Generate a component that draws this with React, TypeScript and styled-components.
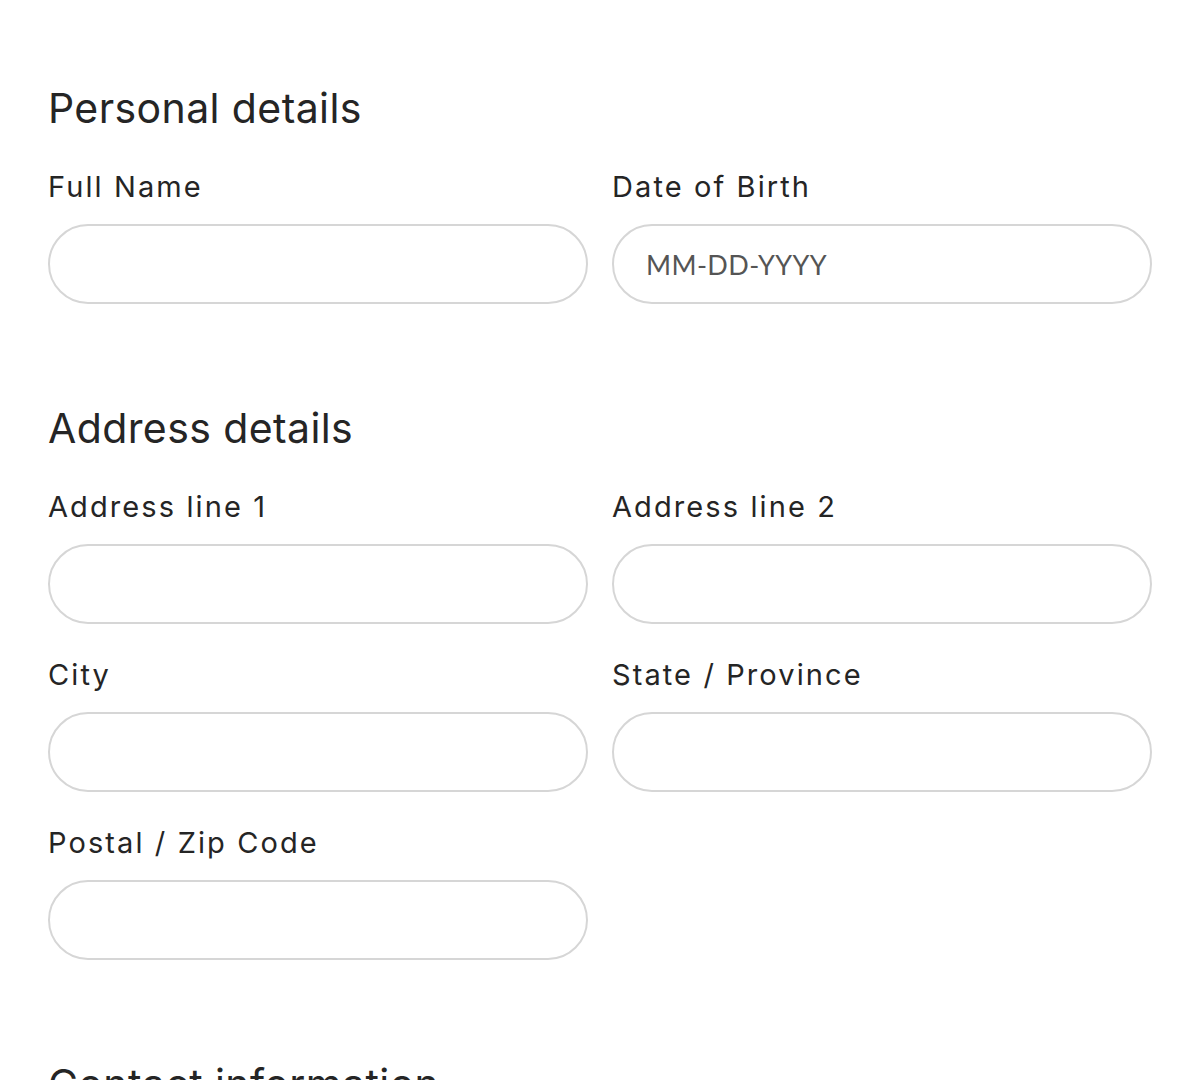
import styled, { createGlobalStyle } from 'styled-components'

const GlobalStyle = createGlobalStyle`
  html, body {
    margin: 0;
    padding: 0;
    background: #ffffff;
  }

  body {
    font-family: Inter, 'Noto Sans', sans-serif;
    color: #222222;
  }
`

type FieldDef = {
  label: string
  placeholder?: string
}

const personal: FieldDef[] = [
  { label: 'Full Name' },
  { label: 'Date of Birth', placeholder: 'MM-DD-YYYY' },
]

const address: FieldDef[] = [
  { label: 'Address line 1' },
  { label: 'Address line 2' },
  { label: 'City' },
  { label: 'State / Province' },
  { label: 'Postal / Zip Code' },
]

const FormSection = ({ title, fields }: { title: string; fields: FieldDef[] }) => {
  return (
    <Section>
      <SectionTitle>{title}</SectionTitle>
      <FieldGrid>
        {fields.map((f) => (
          <Field key={f.label}>
            <Label>{f.label}</Label>
            <Input type="text" placeholder={f.placeholder} />
          </Field>
        ))}
      </FieldGrid>
    </Section>
  )
}

const App = () => {
  return (
    <>
      <GlobalStyle />
      <Page>
        <FormSection title="Personal details" fields={personal} />
        <FormSection title="Address details" fields={address} />
        <Section>
          <SectionTitle>Contact information</SectionTitle>
        </Section>
      </Page>
    </>
  )
}

const Page = styled.main`
  display: flex;
  flex-direction: column;
  gap: 96px;
  padding: 80px 48px 48px;
  height: 1080px;
  box-sizing: border-box;
  overflow: hidden;
`

const Section = styled.section`
  display: flex;
  flex-direction: column;
`

const SectionTitle = styled.h2`
  margin: 0 0 31px;
  font-size: 41px;
  line-height: 56px;
  font-weight: 400;
  letter-spacing: 0.4px;
  color: #252525;
`

const FieldGrid = styled.div`
  display: grid;
  grid-template-columns: 1fr 1fr;
  column-gap: 24px;
  row-gap: 31px;
`

const Field = styled.div`
  display: flex;
  flex-direction: column;
`

const Label = styled.label`
  margin-bottom: 17px;
  font-size: 29px;
  line-height: 40px;
  font-weight: 400;
  letter-spacing: 2.1px;
  color: #252525;
`

const Input = styled.input`
  box-sizing: border-box;
  width: 100%;
  height: 80px;
  padding: 0 32px;
  border: 2px solid #d6d6d6;
  border-radius: 40px;
  background: #ffffff;
  font-family: Lato, 'Noto Sans', sans-serif;
  font-size: 27px;
  letter-spacing: 0.4px;
  color: #333333;
  outline: none;

  &::placeholder {
    color: #555555;
    opacity: 1;
  }
`

export default App
